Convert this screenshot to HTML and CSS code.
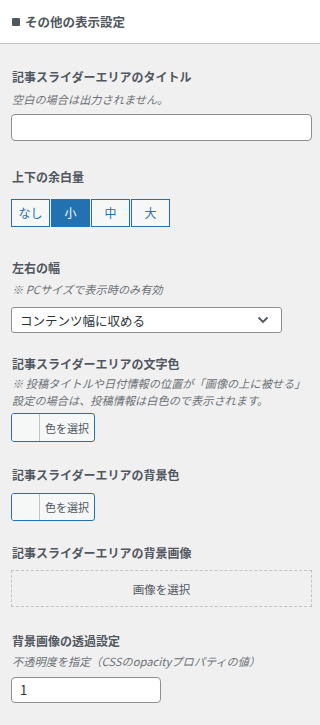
FILE: index.html
```html
<!DOCTYPE html>
<html lang="ja">
<head>
    <meta charset="UTF-8">
    <meta name="viewport" content="width=device-width, initial-scale=1.0">
    <title>その他の表示設定</title>
    <link rel="stylesheet" href="styles.css">
</head>
<body>
    <div class="section-head">
        <span class="section-mark"></span>
        <h2 class="section-title">その他の表示設定</h2>
    </div>

    <div class="controls">
        <div class="control control-first">
            <label class="control-title" for="sliderTitle">記事スライダーエリアのタイトル</label>
            <p class="control-desc">空白の場合は出力されません。</p>
            <input type="text" id="sliderTitle" class="text-input">
        </div>

        <div class="control control-spacing">
            <div class="control-title">上下の余白量</div>
            <div class="btn-group">
                <button class="seg-btn">なし</button>
                <button class="seg-btn is-active">小</button>
                <button class="seg-btn">中</button>
                <button class="seg-btn">大</button>
            </div>
        </div>

        <div class="control control-width">
            <label class="control-title" for="sliderWidth">左右の幅</label>
            <p class="control-desc">※ PCサイズで表示時のみ有効</p>
            <div class="select-wrap">
                <select id="sliderWidth" class="select-input">
                    <option>コンテンツ幅に収める</option>
                    <option>画面幅いっぱい</option>
                </select>
                <svg class="select-arrow" width="12" height="8" viewBox="0 0 12 8"><path d="M1.5 1.5 L6 6 L10.5 1.5" fill="none" stroke="#50575e" stroke-width="1.8"/></svg>
            </div>
        </div>

        <div class="control control-color">
            <div class="control-title">記事スライダーエリアの文字色</div>
            <p class="control-desc">※ 投稿タイトルや日付情報の位置が「画像の上に被せる」<br>設定の場合は、投稿情報は白色ので表示されます。</p>
            <button class="color-btn"><span class="color-swatch"></span><span class="color-text">色を選択</span></button>
        </div>

        <div class="control control-bg">
            <div class="control-title">記事スライダーエリアの背景色</div>
            <button class="color-btn"><span class="color-swatch"></span><span class="color-text">色を選択</span></button>
        </div>

        <div class="control control-image">
            <div class="control-title">記事スライダーエリアの背景画像</div>
            <button class="media-btn">画像を選択</button>
        </div>

        <div class="control control-opacity">
            <label class="control-title" for="bgOpacity">背景画像の透過設定</label>
            <p class="control-desc">不透明度を指定（CSSのopacityプロパティの値）</p>
            <input type="text" id="bgOpacity" class="text-input input-short" value="1">
        </div>
    </div>
</body>
</html>
```

FILE: styles.css
```css
body {
    margin: 0;
    background-color: #f0f0f1;
    font-family: "Noto Sans CJK JP", "Noto Sans", sans-serif;
    color: #50575e;
}
.section-head {
    display: flex;
    align-items: center;
    height: 44px;
    padding: 0 12px;
    background-color: #fff;
    border-bottom: 1px solid #c3c4c7;
    box-sizing: border-box;
}
.section-mark {
    width: 8px;
    height: 8px;
    border-radius: 1px;
    background-color: #50575e;
    margin-right: 5px;
}
.section-title {
    margin: 0;
    font-size: 12.5px;
    font-weight: bold;
    line-height: 18px;
}
.controls {
    padding: 0 8px 0 11px;
}
.control-first {
    margin-top: 22px;
}
.control-spacing {
    margin-top: 25px;
}
.control-width {
    margin-top: 30px;
}
.control-color {
    margin-top: 20px;
}
.control-bg {
    margin-top: 22px;
}
.control-image {
    margin-top: 21px;
}
.control-opacity {
    margin-top: 23px;
}
.control-title {
    display: block;
    padding: 2px 0 0 1px;
    font-size: 12px;
    font-weight: bold;
    line-height: 18px;
    color: #50575e;
}
.control-desc {
    margin: 5px 0 0;
    padding-left: 1px;
    font-size: 11.2px;
    font-style: italic;
    line-height: 16.5px;
    color: #6c7075;
}
.control-width .control-desc {
    margin-top: 4px;
}
.control-color .control-desc {
    margin-top: 2px;
}
.control-opacity .control-desc {
    margin-top: 3px;
}
.text-input {
    display: block;
    width: 301px;
    height: 27px;
    margin-top: 6px;
    padding: 0 8px;
    border: 1px solid #8c8f94;
    border-radius: 4px;
    background-color: #fff;
    box-sizing: border-box;
    font-family: inherit;
    font-size: 13px;
    color: #2c3338;
}
.input-short {
    width: 150px;
    height: 26px;
    margin-top: 7px;
}
.btn-group {
    display: flex;
    gap: 1px;
    margin-top: 13px;
}
.seg-btn {
    width: 39px;
    height: 28px;
    padding: 0;
    border: 1px solid #2271b1;
    background-color: #f6f7f7;
    font-family: inherit;
    font-size: 12px;
    color: #2271b1;
}
.seg-btn.is-active {
    background-color: #2271b1;
    color: #fff;
}
.select-wrap {
    position: relative;
    width: 271px;
    margin-top: 10px;
}
.select-input {
    display: block;
    width: 100%;
    height: 26px;
    padding: 0 24px 0 8px;
    border: 1px solid #8c8f94;
    border-radius: 3px;
    background-color: #fff;
    box-sizing: border-box;
    appearance: none;
    font-family: inherit;
    font-size: 12.5px;
    color: #2c3338;
}
.select-arrow {
    position: absolute;
    right: 13px;
    top: 9px;
    pointer-events: none;
}
.color-btn {
    display: flex;
    align-items: stretch;
    width: 84px;
    height: 29px;
    margin-top: 5px;
    padding: 0;
    border: 1px solid #2271b1;
    border-radius: 3px;
    background-color: #f6f7f7;
    overflow: hidden;
    font-family: inherit;
}
.control-bg .color-btn {
    margin-top: 9px;
    height: 28px;
}
.color-swatch {
    width: 27px;
    border-right: 1px solid #c3c4c7;
    background-color: #f6f7f7;
}
.color-text {
    flex: 1;
    display: flex;
    align-items: center;
    justify-content: center;
    font-size: 11px;
    color: #50575e;
}
.media-btn {
    display: block;
    width: 301px;
    height: 37px;
    margin-top: 8px;
    padding: 0;
    border: 1px dashed #c3c4c7;
    background-color: transparent;
    font-family: inherit;
    font-size: 11.5px;
    color: #50575e;
}
```
